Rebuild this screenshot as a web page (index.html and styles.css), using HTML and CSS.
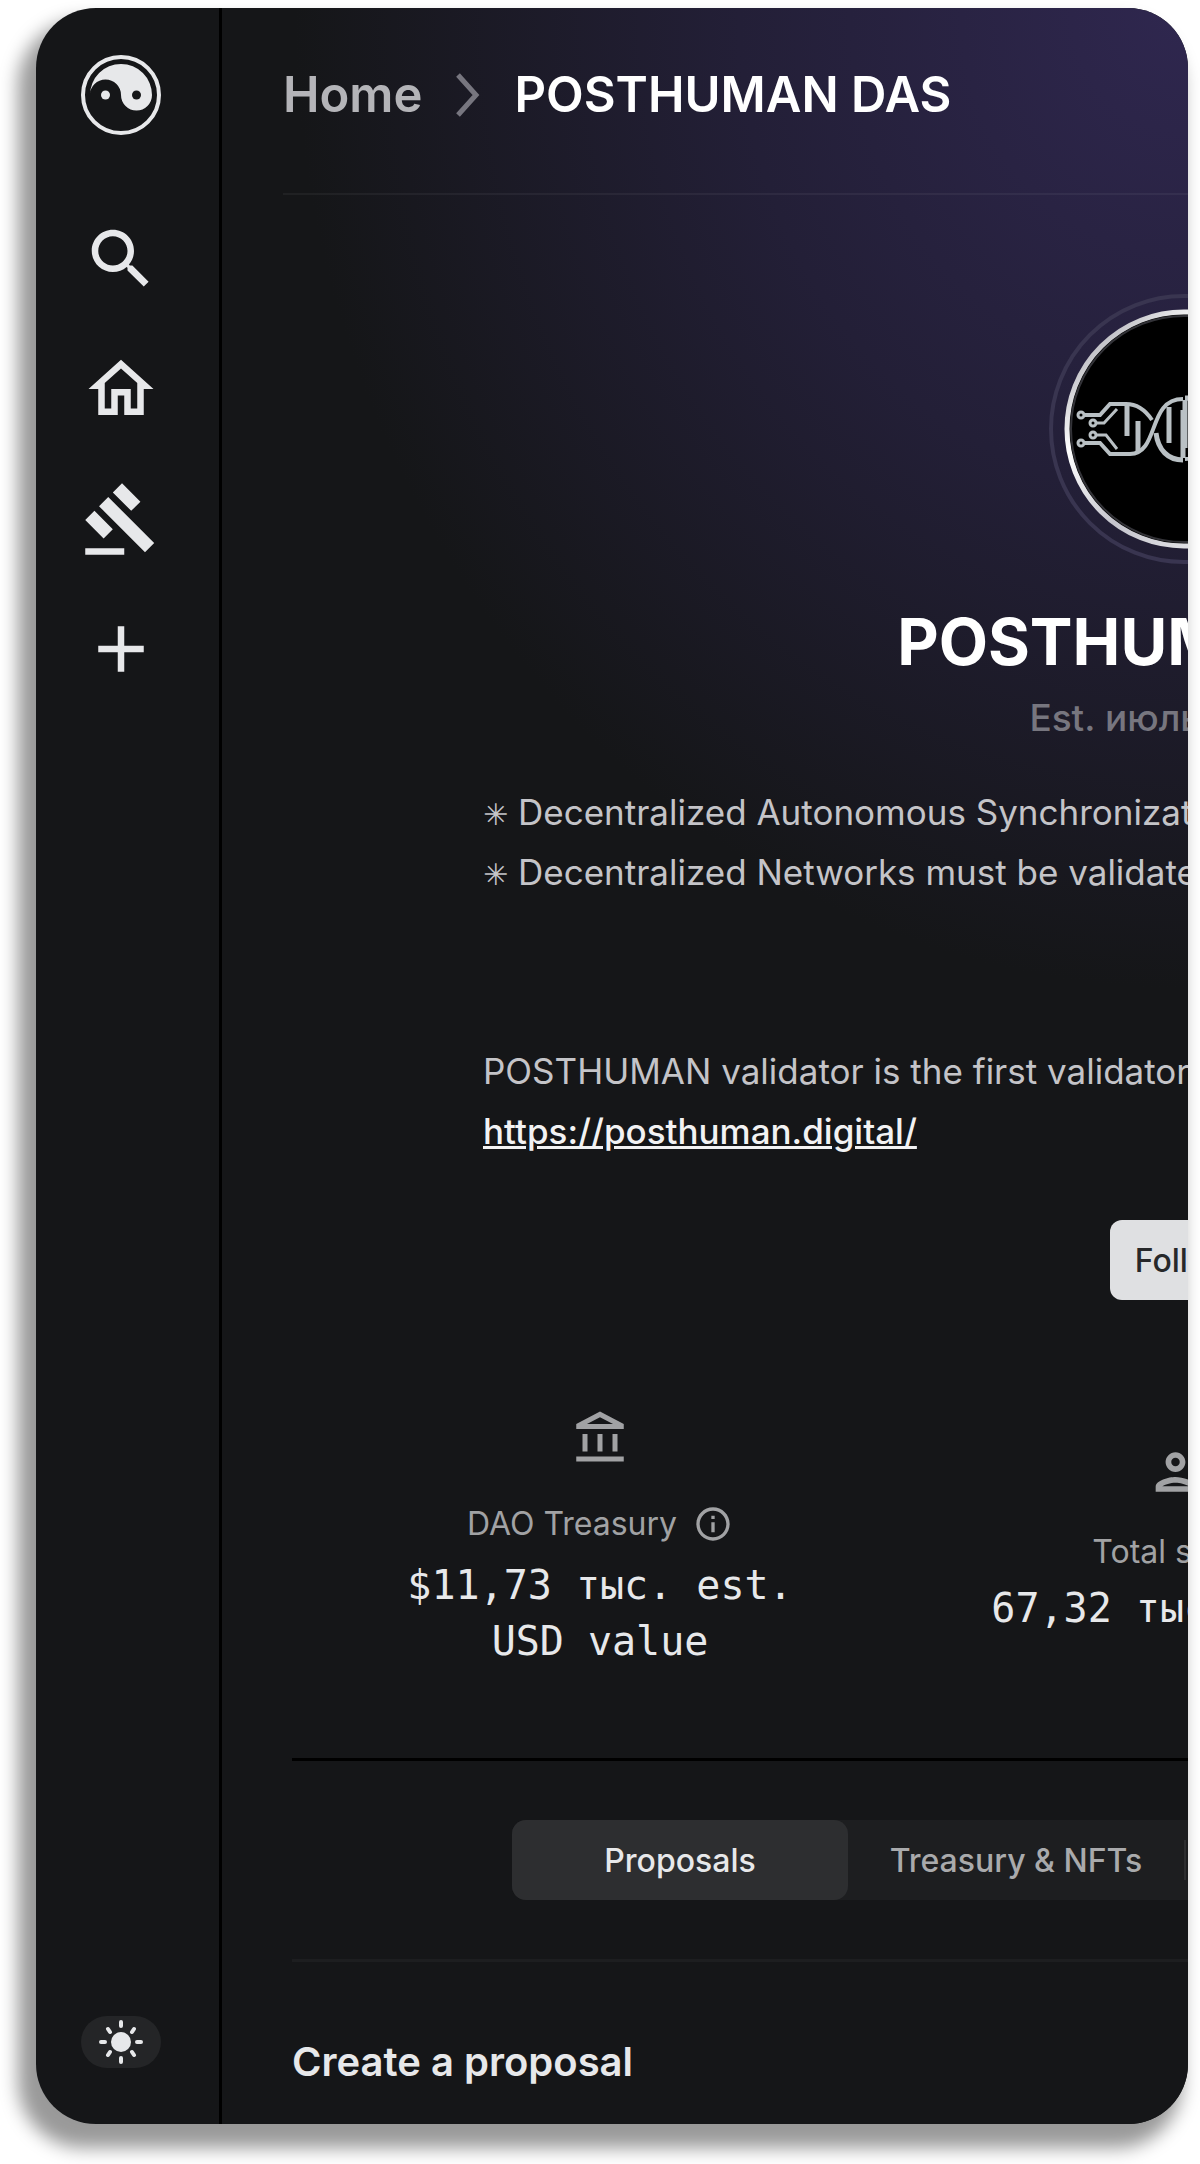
FILE: index.html
```html
<!DOCTYPE html>
<html lang="en">
<head>
    <meta charset="UTF-8">
    <meta name="viewport" content="width=device-width, initial-scale=1.0">
    <title>POSTHUMAN DAS</title>
    <link rel="stylesheet" href="styles.css">
</head>
<body>
    <div class="window">
        <aside class="sidebar">
            <a href="#" class="logo" aria-label="DAO DAO">
                <svg viewBox="0 0 80 80">
                    <circle cx="40" cy="40" r="38" fill="none" stroke="currentColor" stroke-width="4"/>
                    <path d="M9 40A31 31 0 0 1 71 40A15.500 15.500 0 0 1 40 40A15.500 15.500 0 0 0 9 40z" fill="currentColor"/>
                    <circle cx="24.500" cy="40" r="4.500" fill="currentColor"/>
                    <circle cx="55.500" cy="40" r="4.500" fill="#151618"/>
                </svg>
            </a>
            <nav class="side-nav">
                <button type="button" aria-label="Search">
                    <svg viewBox="0 0 24 24"><path d="M15.500 14h-.79l-.28-.27C15.410 12.590 16 11.110 16 9.500 16 5.910 13.090 3 9.500 3S3 5.910 3 9.500 5.910 16 9.500 16c1.610 0 3.090-.59 4.230-1.570l.27.28v.79l5 4.990L20.490 19l-4.990-5zm-6 0C7.010 14 5 11.990 5 9.500S7.010 5 9.500 5 14 7.010 14 9.500 11.990 14 9.500 14z"/></svg>
                </button>
                <a href="#" aria-label="Home">
                    <svg viewBox="0 0 24 24"><path d="M12 5.690l5 4.500V18h-2v-6H9v6H7v-7.810l5-4.500M12 3L2 12h3v8h6v-6h2v6h6v-8h3L12 3z"/></svg>
                </a>
                <a href="#" aria-label="Proposals">
                    <svg viewBox="0 0 24 24"><path d="M1 21h12v2H1zM5.245 8.070l2.830-2.827 14.140 14.142-2.828 2.828zM12.317 1l5.657 5.656-2.830 2.830-5.654-5.660zM3.825 9.485l5.657 5.657-2.828 2.828-5.657-5.657z"/></svg>
                </a>
                <a href="#" aria-label="Create">
                    <svg viewBox="0 0 24 24"><path d="M19 13h-6v6h-2v-6H5v-2h6V5h2v6h6z"/></svg>
                </a>
            </nav>
            <button type="button" class="theme-toggle" aria-label="Toggle theme">
                <svg viewBox="0 0 50 50">
                    <circle cx="25" cy="25" r="10" fill="currentColor"/>
                    <g stroke="currentColor" stroke-width="4" stroke-linecap="round">
                        <path d="M25 5v4M25 41v4M5 25h4M41 25h4M12 12l2 3M38 12l-2 3M12 38l2-3M38 38l-2-3"/>
                    </g>
                </svg>
            </button>
        </aside>

        <main class="main">
            <header class="breadcrumbs">
                <a href="#">Home</a>
                <svg viewBox="0 0 24 44"><path d="M2 2l18 20L2 42" fill="none" stroke="currentColor" stroke-width="5"/></svg>
                <span>POSTHUMAN DAS</span>
            </header>

            <section class="dao">
                <svg class="avatar" viewBox="0 0 270 270">
                    <defs>
                        <linearGradient id="rim" x1="0" y1="0" x2="1" y2="1">
                            <stop offset="0" stop-color="#8f8f98"/>
                            <stop offset="0.300" stop-color="#ffffff"/>
                            <stop offset="0.550" stop-color="#c4c4cc"/>
                            <stop offset="1" stop-color="#ffffff"/>
                        </linearGradient>
                    </defs>
                    <circle cx="135" cy="135" r="133" fill="none" stroke="#393550" stroke-width="4"/>
                    <circle cx="135" cy="135" r="117" fill="#000" stroke="url(#rim)" stroke-width="5"/>
                    <circle cx="135" cy="135" r="113" fill="none" stroke="#333338" stroke-width="2"/>
                    <g id="strand" fill="none" stroke="#b9c0c4">
                        <g stroke-width="3">
                            <circle cx="32" cy="121" r="3"/>
                            <circle cx="44" cy="129" r="3"/>
                            <circle cx="44" cy="141" r="3"/>
                            <circle cx="32" cy="149" r="3"/>
                            <path d="M47 129h8l13-14M47 141h10l11 14"/>
                        </g>
                        <g stroke-width="5">
                            <path d="M35 121h16l10-11h16c11 0 20 7 26 16" stroke-width="4"/>
                            <path d="M35 149h16l10 11h20c30-1 17-55 53-55" stroke-width="4"/>
                            <path d="M107 139c2 17 12 27 27 27"/>
                            <path d="M78 111v31M89 127v32M120 113v36M134 116v48"/>
                        </g>
                    </g>
                    <use href="#strand" transform="rotate(180 135 135)"/>
                </svg>
                <h1>POSTHUMAN DAS</h1>
                <p class="established">Est. июль 2022 г.</p>

                <div class="description">
                    <p><span class="star">✳</span> Decentralized Autonomous Synchronization</p>
                    <p><span class="star">✳</span> Decentralized Networks must be validated</p>
                    <p class="about">POSTHUMAN validator is the first validator</p>
                    <p><a href="https://posthuman.digital/">https://posthuman.digital/</a></p>
                </div>

                <button type="button" class="follow">Follow</button>
            </section>

            <section class="stats">
                <div class="stat">
                    <svg viewBox="-2.100 -1.600 27.200 27.200"><path d="M6.500 10h-2v7h2v-7zm6 0h-2v7h2v-7zm8.500 9H2v2h19v-2zm-2.500-9h-2v7h2v-7zm-7-6.740L16.710 6H6.290l5.210-2.740m0-2.260L2 6v2h19V6l-9.500-5z"/></svg>
                    <div class="stat-label">
                        DAO Treasury
                        <button type="button" class="info" aria-label="Treasury info">
                            <svg viewBox="0 0 24 24"><path d="M11 7h2v2h-2zm0 4h2v6h-2zm1-9C6.480 2 2 6.480 2 12s4.480 10 10 10 10-4.480 10-10S17.520 2 12 2zm0 18c-4.410 0-8-3.590-8-8s3.590-8 8-8 8 3.590 8 8-3.590 8-8 8z"/></svg>
                        </button>
                    </div>
                    <p class="stat-value">$11,73 тыс. est.<br>USD value</p>
                </div>
                <div class="stat">
                    <svg viewBox="0 0 24 24"><path d="M9 13.750c-2.340 0-7 1.170-7 3.500V19h14v-1.750c0-2.330-4.660-3.500-7-3.500zM4.340 17c.84-.58 2.870-1.250 4.660-1.250s3.820.67 4.660 1.250H4.340zM9 12c1.930 0 3.500-1.570 3.500-3.500S10.930 5 9 5 5.500 6.570 5.500 8.500 7.070 12 9 12zm0-5c.83 0 1.500.67 1.500 1.500S9.830 10 9 10s-1.500-.67-1.500-1.500S8.170 7 9 7zm7.040 6.810c1.160.84 1.960 1.960 1.960 3.440V19h4v-1.750c0-2.020-3.500-3.170-5.960-3.440zM15 12c1.930 0 3.500-1.570 3.500-3.500S16.930 5 15 5c-.54 0-1.040.13-1.500.35.63.89 1 1.980 1 3.150s-.37 2.260-1 3.150c.46.22.96.35 1.500.35z"/></svg>
                    <div class="stat-label">Total staked</div>
                    <p class="stat-value">67,32 тыс. $PHMN</p>
                </div>
            </section>

            <div class="tabs-row">
                <div class="tabs">
                    <button type="button" class="tab active">Proposals</button>
                    <button type="button" class="tab">Treasury &amp; NFTs</button>
                    <button type="button" class="tab">Subdaos</button>
                    <button type="button" class="tab">Members</button>
                </div>
            </div>

            <h2>Create a proposal</h2>
        </main>
    </div>
</body>
</html>
```
FILE: styles.css
```css
* {
    box-sizing: border-box;
}

body {
    margin: 0;
    padding: 8px 12px 40px 36px;
    min-height: 100vh;
    display: flex;
    background: #fff;
    font-family: Inter, "Liberation Sans", sans-serif;
    color: #e7e8ea;
}

h1, h2, p {
    margin: 0;
}

a {
    color: inherit;
    text-decoration: none;
}

button {
    font-family: inherit;
    color: inherit;
    background: none;
    border: none;
    padding: 0;
    cursor: pointer;
}

svg {
    display: block;
}

.window {
    flex: 1;
    min-width: 0;
    display: flex;
    overflow: hidden;
    border-radius: 60px;
    background: #151618;
    box-shadow: -12px 18px 18px 6px rgba(0, 0, 0, 0.4);
}

/* sidebar */

.sidebar {
    flex: none;
    width: 186px;
    padding: 47px 14px 56px 0;
    border-right: 3px solid #000;
    display: flex;
    flex-direction: column;
    align-items: center;
}

.logo svg {
    width: 80px;
    height: 80px;
}

.side-nav {
    display: flex;
    flex-direction: column;
    gap: 52px;
    margin-top: 85px;
}

.side-nav svg {
    width: 78px;
    height: 78px;
    fill: currentColor;
}

.theme-toggle {
    width: 80px;
    height: 52px;
    margin-top: auto;
    border-radius: 26px;
    background: #242527;
    display: flex;
    align-items: center;
    justify-content: center;
}

.theme-toggle svg {
    width: 50px;
    height: 50px;
}

/* main column, wider than the window and cut off at its right edge */

.main {
    flex: none;
    min-width: 1924px;
    padding: 0 70px 30px;
    background: radial-gradient(ellipse 890px 980px at 50% 0, #2f274f, #231f37 50%, #151618);
}

.breadcrumbs {
    height: 187px;
    margin: 0 -9px;
    padding-bottom: 12px;
    border-bottom: 2px solid rgba(255, 255, 255, 0.05);
    display: flex;
    align-items: center;
    gap: 34px;
    font-size: 50px;
    font-weight: 600;
    color: #fff;
}

.breadcrumbs a {
    color: #b4b4b8;
}

.breadcrumbs a,
.breadcrumbs span {
    font-size: 49px;
}

.breadcrumbs svg {
    width: 24px;
    height: 44px;
    color: #77767f;
}

.dao {
    display: flex;
    flex-direction: column;
    align-items: center;
    padding-top: 99px;
}

.avatar {
    width: 270px;
    height: 270px;
}

h1 {
    margin-top: 38px;
    font-size: 64px;
    line-height: 80px;
    font-weight: 700;
    color: #fff;
}

.established {
    margin-top: 12px;
    font-size: 37px;
    line-height: 48px;
    font-weight: 500;
    color: #77767f;
}

.description {
    width: 1402px;
    margin-top: 40px;
    font-size: 35px;
    line-height: 60px;
    color: #c4c4c8;
}

.star {
    font-family: "DejaVu Sans", sans-serif;
    font-size: 30px;
    line-height: 1;
}

.about {
    margin-top: 139px;
}

.description a {
    font-weight: 500;
    color: #f2f2f3;
    text-decoration: underline;
}

.follow {
    height: 80px;
    margin-top: 59px;
    padding: 0 25px;
    border-radius: 12px;
    background: #dfe0e2;
    font-size: 32px;
    font-weight: 500;
    color: #27282a;
}

/* stats */

.stats {
    display: grid;
    grid-template-columns: repeat(3, 1fr);
    align-items: center;
    padding: 105px 16px 89px;
    border-bottom: 3px solid #000;
}

.stat {
    display: flex;
    flex-direction: column;
    align-items: center;
    color: #a1a2a4;
}

.stat > svg {
    width: 68px;
    height: 68px;
    fill: currentColor;
}

.stat-label {
    display: flex;
    align-items: center;
    gap: 16px;
    margin: 26px 0 8px;
    font-size: 32px;
    line-height: 40px;
}

.info svg {
    width: 40px;
    height: 40px;
    margin: 5px 0;
    fill: currentColor;
}

.stat-value {
    font-family: "DejaVu Sans Mono", monospace;
    font-size: 40px;
    line-height: 56px;
    text-align: center;
    color: #e7e8ea;
}

/* tabs */

.tabs-row {
    padding: 59px 0;
    border-bottom: 3px solid #1d1e20;
}

.tabs {
    width: 1344px;
    margin: 0 auto;
    display: flex;
    border-radius: 14px;
    background: #1d1e20;
}

.tab {
    flex: 1;
    height: 80px;
    border-radius: 14px;
    font-size: 32px;
    font-weight: 500;
    color: #a9aaac;
}

.tab.active {
    background: #2d2e30;
    color: #e7e8ea;
}

.tab + .tab + .tab {
    border-radius: 0;
    background: linear-gradient(#2d2e30, #2d2e30) 0 50% / 2px 40px no-repeat;
}

h2 {
    margin-top: 74px;
    font-size: 40px;
    line-height: 52px;
    font-weight: 600;
}
```
